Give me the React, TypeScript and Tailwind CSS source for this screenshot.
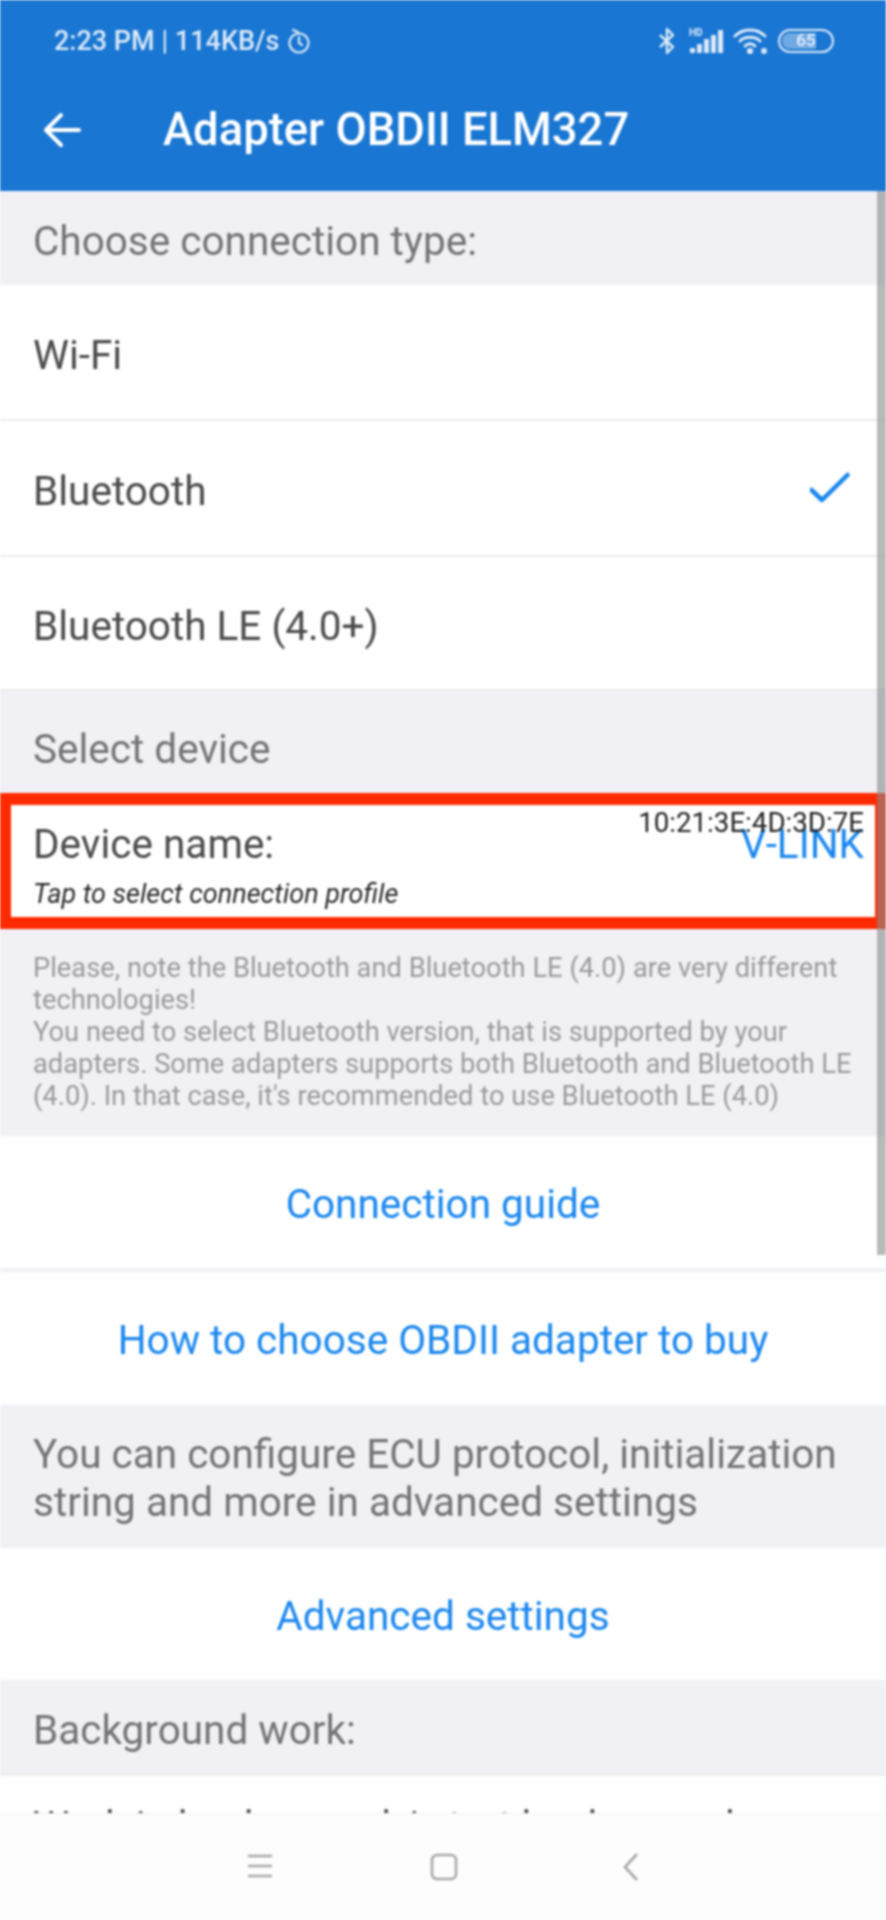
const font = "font-['Roboto',sans-serif]";

const SectionHeader = ({ text }: { text: string }) => (
  <div className="flex h-[94px] shrink-0 items-center bg-[#f0f0f5] px-[33px] pt-[7px] text-[40.5px] text-[#737377]">{text}</div>
);

const OptionRow = ({ text, checked, height }: { text: string; checked?: boolean; height: string }) => (
  <div className={`flex shrink-0 items-center justify-between border-b-2 border-[#ececee] bg-white pl-[33px] pr-[36px] pt-[6px] text-[40.5px] text-[#4a4a4c] ${height}`}>
    <span>{text}</span>
    {checked && (
      <svg className="-mt-[6px]" width="40" height="32" viewBox="0 0 40 32" fill="none" stroke="#1a87ee" strokeWidth="4.5" strokeLinecap="round" strokeLinejoin="round">
        <path d="M1.5 18 L12 28 L37.5 3" />
      </svg>
    )}
  </div>
);

const LinkRow = ({ text, height }: { text: string; height: string }) => (
  <div className={`flex shrink-0 items-center justify-center bg-white pt-[4px] text-[40.5px] text-[#1a87ee] ${height}`}>{text}</div>
);

const StatusIcons = () => (
  <div className="flex items-center gap-[9px]">
    <svg className="mr-[3px]" width="18" height="28" viewBox="0 0 18 28" fill="none" stroke="#dbe9f8" strokeWidth="2.4" strokeLinejoin="round">
      <path d="M2 8 L15 20 L9 26 V2 L15 8 L2 20" />
    </svg>
    <svg width="36" height="28" viewBox="0 0 36 28">
      <text x="1" y="9" fontSize="10" fontWeight="700" fill="#dbe9f8" fontFamily="Roboto, sans-serif">HD</text>
      <rect x="2" y="21" width="5" height="5" fill="#dbe9f8" />
      <rect x="9" y="17" width="5" height="9" fill="#dbe9f8" />
      <rect x="16" y="12" width="5" height="14" fill="#dbe9f8" />
      <rect x="23" y="8" width="5" height="18" fill="#dbe9f8" />
      <rect x="30" y="3" width="5" height="23" fill="#dbe9f8" />
    </svg>
    <svg width="36" height="28" viewBox="0 0 36 28" fill="none" stroke="#dbe9f8" strokeWidth="3" strokeLinecap="round">
      <path d="M2 9 C10 1 24 1 32 9" />
      <path d="M7 14 C12 9 22 9 27 14" />
      <path d="M12 19 C15 16 19 16 22 19" />
      <circle cx="17" cy="24" r="1.6" fill="#dbe9f8" />
      <circle cx="31" cy="24" r="1.4" fill="#dbe9f8" />
    </svg>
    <div className="relative flex h-[24px] w-[56px] items-center justify-center overflow-hidden rounded-full border-2 border-[#dbe9f8] text-[17px] font-medium text-[#eaf3fc]">
      <div className="absolute inset-y-[2px] left-[2px] w-[34px] rounded-l-full bg-[#dbe9f8]/45" />
      <span className="relative">65</span>
    </div>
  </div>
);

export default function App() {
  return (
    <div className={`relative flex h-[1920px] w-[886px] flex-col overflow-hidden bg-white blur-[0.8px] ${font}`}>
      {/* App bar with status bar */}
      <header className="flex h-[191px] shrink-0 flex-col bg-[#1976d2] text-white">
        <div className="flex h-[82px] items-center justify-between pl-[54px] pr-[52px] text-[#dbe9f8]">
          <div className="flex items-center gap-[8px] text-[27px] font-medium">
            <span>2:23 PM | 114KB/s</span>
            <svg width="24" height="28" viewBox="0 0 24 28" fill="none" stroke="#dbe9f8" strokeWidth="2.2" strokeLinecap="round">
              <circle cx="12" cy="16" r="9.5" />
              <path d="M12 10 V16 L15 18" />
              <path d="M6 3 L11 5" />
            </svg>
          </div>
          <StatusIcons />
        </div>
        <div className="flex flex-1 items-center pb-[13px] pl-[43px]">
          <svg width="38" height="36" viewBox="0 0 38 36" fill="none" stroke="white" strokeWidth="4" strokeLinecap="round" strokeLinejoin="round">
            <path d="M36 18 H3 M18 3 L3 18 L18 33" />
          </svg>
          <h1 className="ml-[82px] text-[45.4px] font-medium">Adapter OBDII ELM327</h1>
        </div>
      </header>

      {/* Scrolling content */}
      <main className="flex min-h-0 flex-1 flex-col overflow-hidden">
        <SectionHeader text="Choose connection type:" />
        <OptionRow text="Wi-Fi" height="h-[136px]" />
        <OptionRow text="Bluetooth" checked height="h-[136px]" />
        <OptionRow text="Bluetooth LE (4.0+)" height="h-[134px]" />
        <div className="flex h-[102px] shrink-0 items-center bg-[#f0f0f5] px-[33px] pt-[14px] text-[40.5px] text-[#737377]">Select device</div>

        {/* Highlighted device row */}
        <div className="relative flex h-[136px] shrink-0 flex-col justify-center border-x-[11px] border-y-[12px] border-[#ff2a00] bg-white pl-[22px] pr-[11px] pt-[8px]">
          <div className="flex items-center justify-between text-[40.5px] leading-[46px]">
            <span className="text-[#4a4a4c]">Device name:</span>
            <span className="text-[#1a87ee]">V-LINK</span>
          </div>
          <div className="mt-[11px] text-[27px] italic leading-[32px] text-[#2b2b2b]">Tap to select connection profile</div>
          <span className="absolute right-[11px] top-[2px] text-[27.7px] leading-[32px] text-[#222]">10:21:3E:4D:3D:7E</span>
        </div>

        <div className="h-[207px] shrink-0 bg-[#f0f0f5] px-[33px] pt-[23px] text-[27.3px] leading-[32px] text-[#9a9a9e]">
          Please, note the Bluetooth and Bluetooth LE (4.0) are very different technologies!
          <br />
          You need to select Bluetooth version, that is supported by your adapters. Some adapters supports both Bluetooth and Bluetooth LE (4.0). In that case, it's recommended to use Bluetooth LE (4.0)
        </div>

        <LinkRow text="Connection guide" height="h-[132px]" />
        <div className="h-[4px] shrink-0 bg-[#f0f0f5]" />
        <LinkRow text="How to choose OBDII adapter to buy" height="h-[133px]" />
        <div className="flex h-[143px] shrink-0 items-center bg-[#f0f0f5] px-[33px] pt-[2px] text-[40.5px] leading-[48px] text-[#737377]">
          <span>You can configure ECU protocol, initialization string and more in advanced settings</span>
        </div>
        <LinkRow text="Advanced settings" height="h-[132px]" />
        <SectionHeader text="Background work:" />
        <div className="shrink-0 whitespace-nowrap border-t-2 border-[#ececee] bg-white px-[33px] pt-[27px] text-[40.5px] leading-[46px] text-[#4a4a4c]">
          Work in background / start background
        </div>
      </main>

      {/* Android navigation bar */}
      <nav className="flex h-[107px] shrink-0 items-start justify-center border-t border-[#f2f2f2] bg-[#fdfdfd] pt-[39px]">
        <svg width="26" height="26" viewBox="0 0 26 26" stroke="#a8a8a8" strokeWidth="2.6">
          <path d="M1 3 H25 M1 13 H25 M1 23 H25" />
        </svg>
        <svg className="ml-[157px]" width="28" height="28" viewBox="0 0 28 28" fill="none" stroke="#a8a8a8" strokeWidth="2.6">
          <rect x="2" y="2" width="24" height="24" rx="5" />
        </svg>
        <svg className="ml-[164px]" width="18" height="28" viewBox="0 0 18 28" fill="none" stroke="#a8a8a8" strokeWidth="2.6">
          <path d="M15 1 L3 14 L15 27" />
        </svg>
      </nav>

      {/* Scrollbar thumb */}
      <div className="absolute right-0 top-[191px] h-[1064px] w-[9px] bg-[#8a8a8a]/60" />
    </div>
  );
}
